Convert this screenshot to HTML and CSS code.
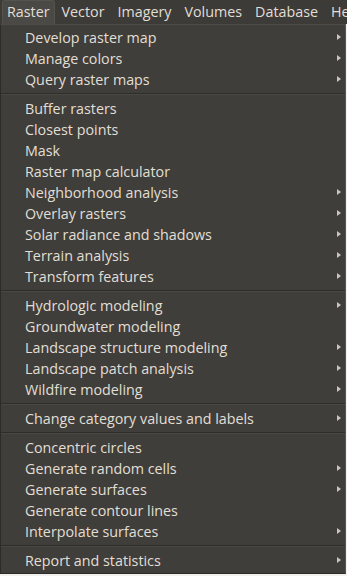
FILE: index.html
```html
<!DOCTYPE html>
<html>
<head>
<meta charset="utf-8">
<link rel="stylesheet" href="styles.css">
</head>
<body>
<div class="menubar">
  <span class="top active">Raster</span>
  <span class="top">Vector</span>
  <span class="top">Imagery</span>
  <span class="top">Volumes</span>
  <span class="top">Database</span>
  <span class="top">Help</span>
</div>
<div class="menu">
  <div class="item sub">Develop raster map</div>
  <div class="item sub">Manage colors</div>
  <div class="item sub">Query raster maps</div>
  <div class="sep"></div>
  <div class="item">Buffer rasters</div>
  <div class="item">Closest points</div>
  <div class="item">Mask</div>
  <div class="item">Raster map calculator</div>
  <div class="item sub">Neighborhood analysis</div>
  <div class="item sub">Overlay rasters</div>
  <div class="item sub">Solar radiance and shadows</div>
  <div class="item sub">Terrain analysis</div>
  <div class="item sub">Transform features</div>
  <div class="sep"></div>
  <div class="item sub">Hydrologic modeling</div>
  <div class="item">Groundwater modeling</div>
  <div class="item sub">Landscape structure modeling</div>
  <div class="item sub">Landscape patch analysis</div>
  <div class="item sub">Wildfire modeling</div>
  <div class="sep"></div>
  <div class="item sub">Change category values and labels</div>
  <div class="sep"></div>
  <div class="item">Concentric circles</div>
  <div class="item sub">Generate random cells</div>
  <div class="item sub">Generate surfaces</div>
  <div class="item">Generate contour lines</div>
  <div class="item sub">Interpolate surfaces</div>
  <div class="sep"></div>
  <div class="item sub">Report and statistics</div>
</div>
<div class="below"></div>
</body>
</html>
```
FILE: styles.css
```css
html, body {
  margin: 0;
  padding: 0;
  background: #f2f1f0;
  overflow: hidden;
}
body {
  width: 347px;
  height: 576px;
  font-family: "Open Sans", "Noto Sans", sans-serif;
  font-size: 14.3px;
  color: #e2ded5;
}
.menubar {
  height: 24px;
  background: #3c3b37;
  display: flex;
  align-items: flex-end;
  padding-left: 2px;
  white-space: nowrap;
  overflow: hidden;
}
.top {
  height: 23px;
  line-height: 22px;
  padding: 0 5px;
  margin-right: 3px;
  flex: none;
}
.active {
  background: #4a4945;
  border: 1px solid #55534e;
  border-bottom: none;
  border-radius: 3px 3px 0 0;
  padding: 0 4px;
  margin-right: 2px;
}
.menu {
  width: 344px;
  background: #3f3e3a;
  border: 1px solid #2c2b28;
  border-right-color: #5a5853;
  border-top-color: #4d4c47;
  padding: 2px 0;
}
.item {
  height: 21px;
  line-height: 21px;
  padding-left: 24px;
  position: relative;
  white-space: nowrap;
}
.sub::after {
  content: "";
  position: absolute;
  right: 4px;
  top: 7px;
  border-left: 4px solid #c9c6bf;
  border-top: 3.5px solid transparent;
  border-bottom: 3.5px solid transparent;
}
.sep {
  height: 8px;
  display: flex;
  flex-direction: column;
  justify-content: center;
}
.sep::before {
  content: "";
  display: block;
  height: 1px;
  background: #2e2d2a;
}
.sep::after {
  content: "";
  display: block;
  height: 1px;
  background: #494843;
}
.below {
  height: 2px;
  background: #f2f1f0;
}
```
